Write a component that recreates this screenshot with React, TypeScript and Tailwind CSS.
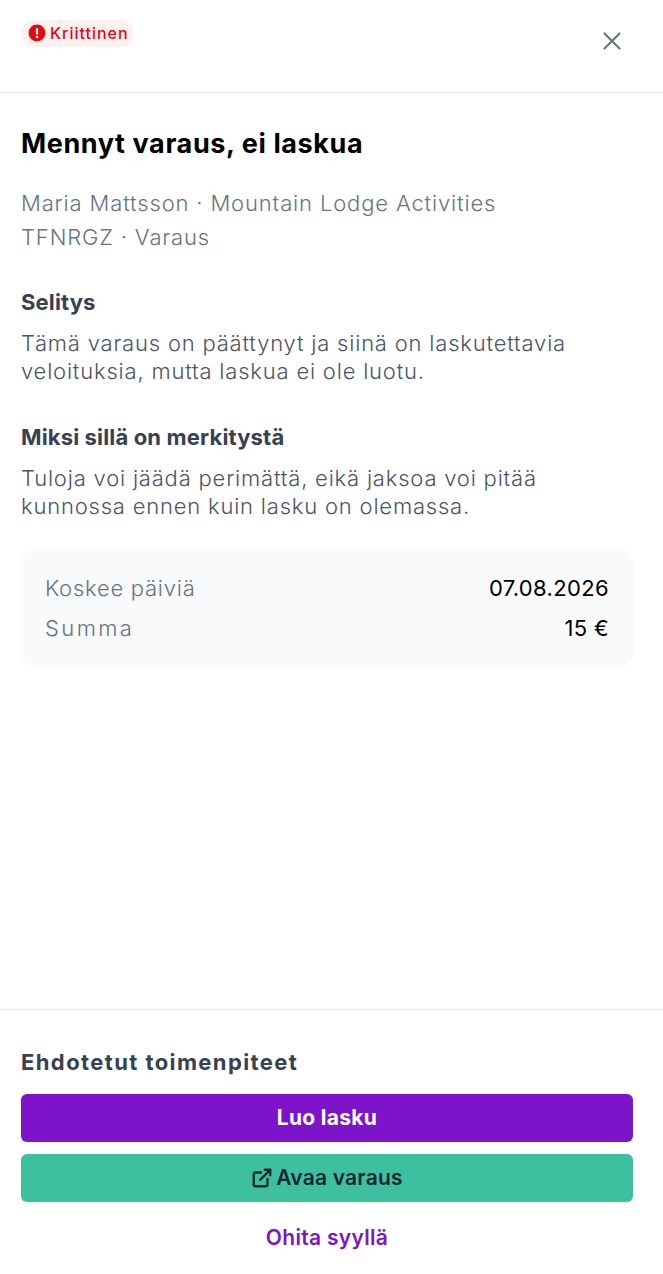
import { ExternalLink, X } from "lucide-react";

const FONT = "font-['Inter','Noto_Sans',sans-serif]";

function AlertIcon() {
  return (
    <svg viewBox="0 0 16 16" className="h-[18px] w-[18px] shrink-0 text-[#e30613]" fill="currentColor">
      <path d="M8 0.5a7.5 7.5 0 1 0 0 15a7.5 7.5 0 0 0 0-15Z" />
      <rect x="7" y="3.5" width="2" height="6" rx="1" fill="#fff" />
      <circle cx="8" cy="11.6" r="1.15" fill="#fff" />
    </svg>
  );
}

function Section({ title, className, children }: { title: string; className: string; children: string }) {
  return (
    <section className={className}>
      <h3 className="text-[22px] leading-[34px] font-bold tracking-[0.15px] text-[#374151]">{title}</h3>
      <p className="mt-[10px] text-[22px] leading-[28px] font-light tracking-[0.8px] text-[#4b5563]">{children}</p>
    </section>
  );
}

export default function App() {
  return (
    <div className={`${FONT} flex h-[1274px] w-[663px] flex-col bg-white`}>
      <header className="flex h-[93px] shrink-0 items-start justify-between border-b border-[#e5e7eb] pr-[36px] pl-[21px]">
        <span className="mt-[20px] flex h-[27px] w-[113px] items-center gap-[4px] rounded-full bg-[#fff0f0] pb-[2px] pl-[7px] text-[16px] font-medium tracking-[1px] text-[#e30613]">
          <AlertIcon />
          Kriittinen
        </span>
        <button className="mt-[26px] text-[#66757f]">
          <X size={30} strokeWidth={1.7} />
        </button>
      </header>

      <main className="flex-1 pt-[33px] pr-[30px] pl-[21px]">
        <h2 className="text-[27px] leading-[36px] font-bold tracking-[0.6px] text-black">Mennyt varaus, ei laskua</h2>
        <div className="mt-[24px] text-[22px] leading-[34px] font-light tracking-[0.85px] text-[#66757f]">
          <p>Maria Mattsson · Mountain Lodge Activities</p>
          <p>TFNRGZ · Varaus</p>
        </div>
        <Section title="Selitys" className="mt-[31px]">
          Tämä varaus on päättynyt ja siinä on laskutettavia veloituksia, mutta laskua ei ole luotu.
        </Section>
        <Section title="Miksi sillä on merkitystä" className="mt-[35px]">
          Tuloja voi jäädä perimättä, eikä jaksoa voi pitää kunnossa ennen kuin lasku on olemassa.
        </Section>
        <div className="mt-[30px] flex h-[116px] flex-col justify-center gap-[6px] rounded-xl bg-[#f8fafc] px-[24px] text-[22px] leading-[34px]">
          <div className="flex justify-between">
            <span className="font-light tracking-[0.75px] text-[#66757f]">Koskee päiviä</span>
            <span className="tracking-[0.35px] text-black">07.08.2026</span>
          </div>
          <div className="flex justify-between">
            <span className="font-light tracking-[2.4px] text-[#66757f]">Summa</span>
            <span className="tracking-[0.35px] text-black">15 €</span>
          </div>
        </div>
      </main>

      <footer className="h-[265px] shrink-0 border-t border-[#e5e7eb] pt-[35px] pr-[30px] pl-[21px]">
        <h3 className="text-[22px] leading-[34px] font-bold tracking-[1.4px] text-[#374151]">Ehdotetut toimenpiteet</h3>
        <div className="mt-[15px] flex flex-col gap-[12px]">
          <button className="h-[48px] rounded-md bg-[#7e14c9] text-[21px] font-bold tracking-[0.3px] text-white">Luo lasku</button>
          <button className="flex h-[48px] items-center justify-center gap-[3px] rounded-md bg-[#3dc0a0] text-[21px] font-semibold tracking-[0.2px] text-[#0f2733]">
            <ExternalLink size={22} strokeWidth={2.5} />
            Avaa varaus
          </button>
          <button className="h-[48px] text-[21px] font-semibold tracking-[0.3px] text-[#7e14c9]">Ohita syyllä</button>
        </div>
      </footer>
    </div>
  );
}
